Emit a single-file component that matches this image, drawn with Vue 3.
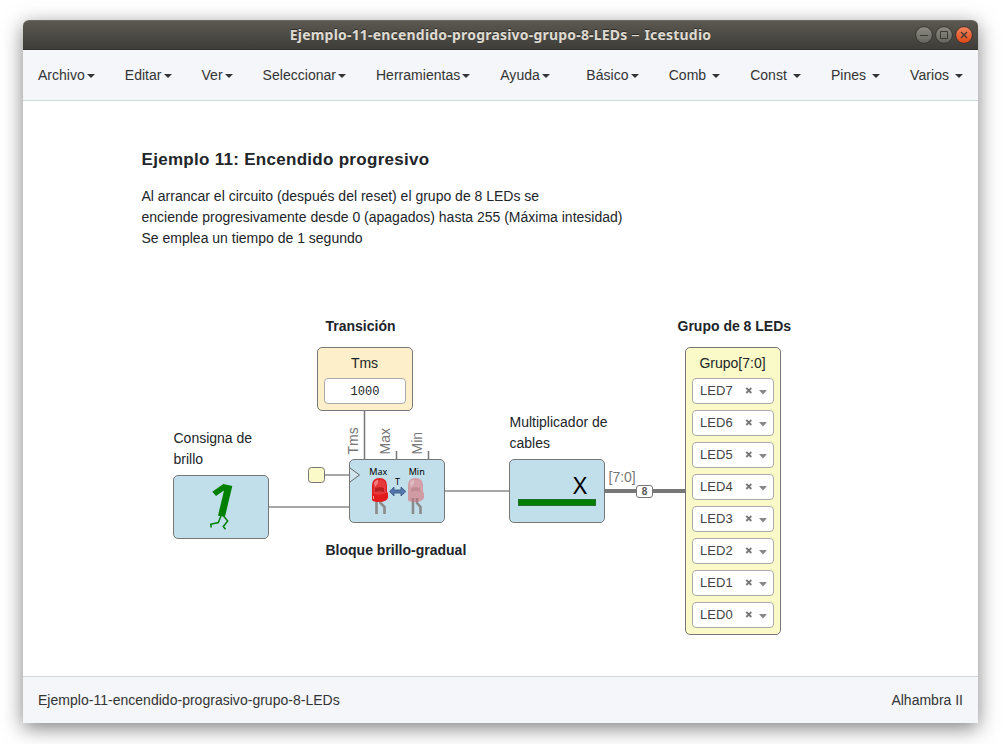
<script setup>
const leftMenus = ['Archivo', 'Editar', 'Ver', 'Seleccionar', 'Herramientas', 'Ayuda']
const rightMenus = ['Básico', 'Comb ', 'Const ', 'Pines ', 'Varios ']
const leds = ['LED7', 'LED6', 'LED5', 'LED4', 'LED3', 'LED2', 'LED1', 'LED0']
const project = 'Ejemplo-11-encendido-prograsivo-grupo-8-LEDs'
</script>

<template>
  <div class="desktop">
    <div class="window">
      <header class="titlebar">
        <span class="title">{{ project }} <span class="dash">–</span> Icestudio</span>
        <div class="controls">
          <svg width="58" height="20" viewBox="0 0 58 20">
            <defs>
              <linearGradient id="grey" x1="0" y1="0" x2="0" y2="1">
                <stop offset="0" stop-color="#8d8b83" />
                <stop offset="1" stop-color="#65645e" />
              </linearGradient>
              <linearGradient id="orange" x1="0" y1="0" x2="0" y2="1">
                <stop offset="0" stop-color="#f4845e" />
                <stop offset="1" stop-color="#dd4814" />
              </linearGradient>
            </defs>
            <circle cx="9" cy="10" r="8.400" fill="url(#grey)" stroke="#35342f" />
            <circle cx="29" cy="10" r="8.400" fill="url(#grey)" stroke="#35342f" />
            <circle cx="49" cy="10" r="8.400" fill="url(#orange)" stroke="#35342f" />
            <g fill="none" stroke="#3a3934" stroke-width="1">
              <path d="M5 10.500H13M25.500 6.500H32.500V13.500H25.500Z" />
              <path d="M46 7L52 13M52 7L46 13" stroke-width="1.300" />
            </g>
          </svg>
        </div>
      </header>

      <nav class="menubar">
        <ul class="menus">
          <li v-for="m in leftMenus" :key="m" class="menu">{{ m }}<i class="caret"></i></li>
        </ul>
        <ul class="menus right">
          <li v-for="m in rightMenus" :key="m" class="menu">{{ m }}<i class="caret"></i></li>
        </ul>
      </nav>

      <main class="canvas">
        <svg class="wires" width="955" height="575" viewBox="23 101 955 575">
          <g fill="none" stroke="#888" stroke-width="1.500">
            <path d="M269 507H349" />
            <path d="M325 475H349" />
            <path d="M445 491H509" />
            <path d="M364.500 411V459" stroke="#777" />
            <path d="M396.500 451V459M428.500 451V459" stroke="#777" />
          </g>
          <path d="M605 491H685" stroke="#777" stroke-width="4" />
          <rect x="308.500" y="467.500" width="16" height="15" rx="3" fill="#fafac8" stroke="#777" />
          <g class="port">
            <text transform="translate(358 454.500) rotate(-90)">Tms</text>
            <text transform="translate(390 454.500) rotate(-90)">Max</text>
            <text transform="translate(422 454.500) rotate(-90)">Min</text>
            <text x="608.500" y="482">[7:0]</text>
          </g>
          <rect x="636.500" y="485.500" width="16" height="12" rx="2.500" fill="#fff" stroke="#777" />
          <text class="size" x="644.500" y="495">8</text>
        </svg>

        <section class="note intro">
          <h1>Ejemplo 11: Encendido progresivo</h1>
          <p>Al arrancar el circuito (después del reset) el grupo de 8 LEDs se<br>enciende progresivamente desde 0 (apagados) hasta 255 (Máxima intesidad)<br>Se emplea un tiempo de 1 segundo</p>
        </section>
        <div class="note bold transition">Transición</div>
        <div class="note bold group-title">Grupo de 8 LEDs</div>
        <div class="note bold gradual">Bloque brillo-gradual</div>
        <div class="note setpoint">Consigna de<br>brillo</div>
        <div class="note multiplier">Multiplicador de<br>cables</div>

        <div class="block constant">
          <div class="label">Tms</div>
          <div class="value">1000</div>
        </div>

        <div class="block blue one">
          <svg width="94" height="62" viewBox="174 476 94 62">
            <path d="M212.300 491.700L223.300 484L232.300 486L225 516.700L218 515.700L224 490.500L216 496Z" fill="#008000" />
            <path d="M221 516L218.300 522.500L210.700 524.300L211.300 527.500M223.500 516L227.700 521L223.300 526.500L225.500 529.300" fill="none" stroke="#008000" stroke-width="1.500" />
          </svg>
        </div>

        <div class="block blue fade">
          <svg width="94" height="62" viewBox="350 460 94 62">
            <path d="M350 468L359.500 475L350 482" fill="#cfe5ee" stroke="#666" />
            <g class="tiny">
              <text x="378.300" y="474.700">Max</text>
              <text x="416.700" y="474.700">Min</text>
              <text x="397.600" y="485">T</text>
            </g>
            <g fill="none" stroke="#8b8b8b" stroke-width="2.600">
              <path d="M376.500 500V514M380.500 500V503L384.500 507V514" />
              <path d="M413 498V514M417 498V503L420.500 507V514" />
            </g>
            <path d="M372 500V485.500Q372 478 379.500 478Q387 478 387 485.500V492L388 493V498Q386 502 379.500 502Q373 502 372 500Z" fill="#e31b1d" />
            <path d="M373.500 494V485Q374 479.500 379.500 479.500Q385.500 479.500 386 485V493Q380 496 373.500 494Z" fill="#e5393b" />
            <path d="M375 488L380 487L384 488V492L380 491L375 492Z" fill="#b82020" />
            <path d="M374 483Q375 480 378 480V483L375 487Z" fill="#f28080" />
            <path d="M373.500 496V499" fill="none" stroke="#f7a0a0" />
            <path d="M408 500V485.500Q408 478 415.500 478Q423 478 423 485.500V492L424 493V498Q422 502 415.500 502Q409 502 408 500Z" fill="#d3939b" opacity=".9" />
            <path d="M409.500 492V485Q410 479.500 415.500 479.500Q421.500 479.500 422 485V491Q416 494 409.500 492Z" fill="#d4a0a9" />
            <path d="M411 488L416 487L420 488V492L416 491L411 492Z" fill="#c28a93" />
            <path d="M410 483Q411 480 414 480V483L411 487Z" fill="#e0bcc4" />
            <path d="M413 498V502M417 498V502" stroke="#ab7c84" stroke-width="2.400" />
            <path d="M389.500 491.500L394 487V490H401V487L405.800 491.500L401 496V493H394V496Z" fill="#5577b0" stroke="#365079" stroke-width=".8" />
          </svg>
        </div>

        <div class="block blue times">
          <svg width="94" height="62" viewBox="510 460 94 62">
            <text class="x" x="580" y="494">X</text>
            <rect x="518.300" y="499.300" width="77.400" height="6.400" fill="#008000" stroke="#17551c" stroke-width=".6" />
          </svg>
        </div>

        <div class="block group">
          <div class="label">Grupo[7:0]</div>
          <div v-for="led in leds" :key="led" class="select">
            <span class="name">{{ led }}</span>
            <svg width="26" height="12" viewBox="0 0 26 12">
              <path d="M2.300 3L7.300 8M7.300 3L2.300 8" stroke="#777" stroke-width="1.800" />
              <path d="M15 5H23L19 9.500Z" fill="#888" />
            </svg>
          </div>
        </div>
      </main>

      <footer class="status">
        <span class="project">{{ project }}</span>
        <span>Alhambra II</span>
      </footer>
    </div>
  </div>
</template>

<style>
body {
  background: #fff;
}
</style>

<style scoped>
.desktop {
  box-sizing: border-box;
  width: 1005px;
  height: 744px;
  padding: 20px 27px 21px 23px;
  overflow: hidden;
  background: #fff;
  font: 14px/21px "Liberation Sans", Arial, sans-serif;
  color: #212529;
}
.window {
  display: flex;
  flex-direction: column;
  height: 703px;
  background: #fff;
  border-radius: 6px 6px 0 0;
  box-shadow: 0 5px 20px rgba(0, 0, 0, 0.5);
}
.titlebar {
  display: grid;
  grid-template-columns: 63px 1fr 63px;
  align-items: center;
  height: 30px;
  box-sizing: border-box;
  border-radius: 6px 6px 0 0;
  border-top: 1px solid #6b695f;
  border-bottom: 1px solid #33322e;
  background: linear-gradient(#5a5850, #3e3d38);
}
.title {
  grid-column: 2;
  justify-self: center;
  font: bold 14px/20px "Noto Sans", sans-serif;
  letter-spacing: 0.2px;
  white-space: nowrap;
  color: #dfdbd2;
  text-shadow: 0 -1px 0 #2c2b27;
}
.dash {
  display: inline-block;
  font-weight: normal;
  transform: scaleX(1.2);
  margin: 0 1px;
}
.controls {
  display: flex;
}
.menubar {
  display: flex;
  justify-content: space-between;
  box-sizing: border-box;
  height: 51px;
  border-bottom: 1px solid #ced6d9;
  background: #f4f6f9;
}
.menus {
  display: flex;
  margin: 0;
  padding: 0;
  list-style: none;
}
.menu {
  padding: 15px;
  line-height: 20px;
  letter-spacing: 0.02px;
  color: #333;
  white-space: pre;
}
.right .menu {
  letter-spacing: 0.05px;
}
.caret {
  display: inline-block;
  margin-left: 2px;
  vertical-align: middle;
  border-top: 4px solid #333;
  border-left: 4px solid transparent;
  border-right: 4px solid transparent;
}
.canvas {
  position: relative;
  flex: 1;
}
.wires {
  position: absolute;
  left: 0;
  top: 0;
}
.port {
  font-size: 14px;
  fill: #777;
}
.size {
  font-size: 10px;
  font-weight: bold;
  text-anchor: middle;
  fill: #555;
}
.note {
  position: absolute;
  white-space: nowrap;
}
.bold {
  font-weight: bold;
}
.intro {
  left: 118.5px;
  top: 46px;
}
.intro h1 {
  margin: 0 0 14px;
  font-size: 17px;
  line-height: 25px;
  letter-spacing: 0.29px;
}
.intro p {
  margin: 0;
}
.transition {
  left: 302.5px;
  top: 215px;
}
.group-title {
  left: 654.5px;
  top: 215px;
}
.gradual {
  left: 302.5px;
  top: 439px;
}
.setpoint {
  left: 150.5px;
  top: 327px;
}
.multiplier {
  left: 486.5px;
  top: 311px;
}
.block {
  position: absolute;
  box-sizing: border-box;
  width: 96px;
  height: 64px;
  border: 1px solid #777;
  border-radius: 5px;
}
.block > svg {
  display: block;
}
.blue {
  background: #c0dfeb;
}
.one {
  left: 150px;
  top: 374px;
}
.fade {
  left: 326px;
  top: 358px;
}
.times {
  left: 486px;
  top: 358px;
}
.constant {
  left: 294px;
  top: 246px;
  padding: 5px 6px;
  background: #fcefca;
}
.group {
  left: 662px;
  top: 246px;
  height: 288px;
  padding: 5px 6px;
  background: #fafac8;
}
.label {
  height: 20px;
  margin-bottom: 5px;
  padding-right: 1px;
  line-height: 20px;
  text-align: center;
}
.value {
  box-sizing: border-box;
  height: 26px;
  border: 1px solid #aaa;
  border-radius: 4px;
  background: #fff;
  font: 12px/26px "Liberation Mono", monospace;
  text-align: center;
}
.select {
  display: flex;
  justify-content: space-between;
  align-items: center;
  box-sizing: border-box;
  height: 26px;
  margin-bottom: 6px;
  padding: 0 3px 0 7px;
  border: 1px solid #aaa;
  border-radius: 4px;
  background: #fff;
  font-size: 13px;
  color: #444;
}
.name {
  margin-top: -2px;
  letter-spacing: 0.1px;
}
.tiny {
  font: 9px "Noto Sans", sans-serif;
  text-anchor: middle;
}
.x {
  font: 24px "Noto Sans", sans-serif;
  text-anchor: middle;
}
.status {
  display: flex;
  justify-content: space-between;
  box-sizing: border-box;
  height: 47px;
  padding: 13px 15px;
  border-top: 1px solid #ced6d9;
  background: #f4f6f9;
  line-height: 20px;
  color: #333;
}
.project {
  letter-spacing: 0.02px;
}
</style>
